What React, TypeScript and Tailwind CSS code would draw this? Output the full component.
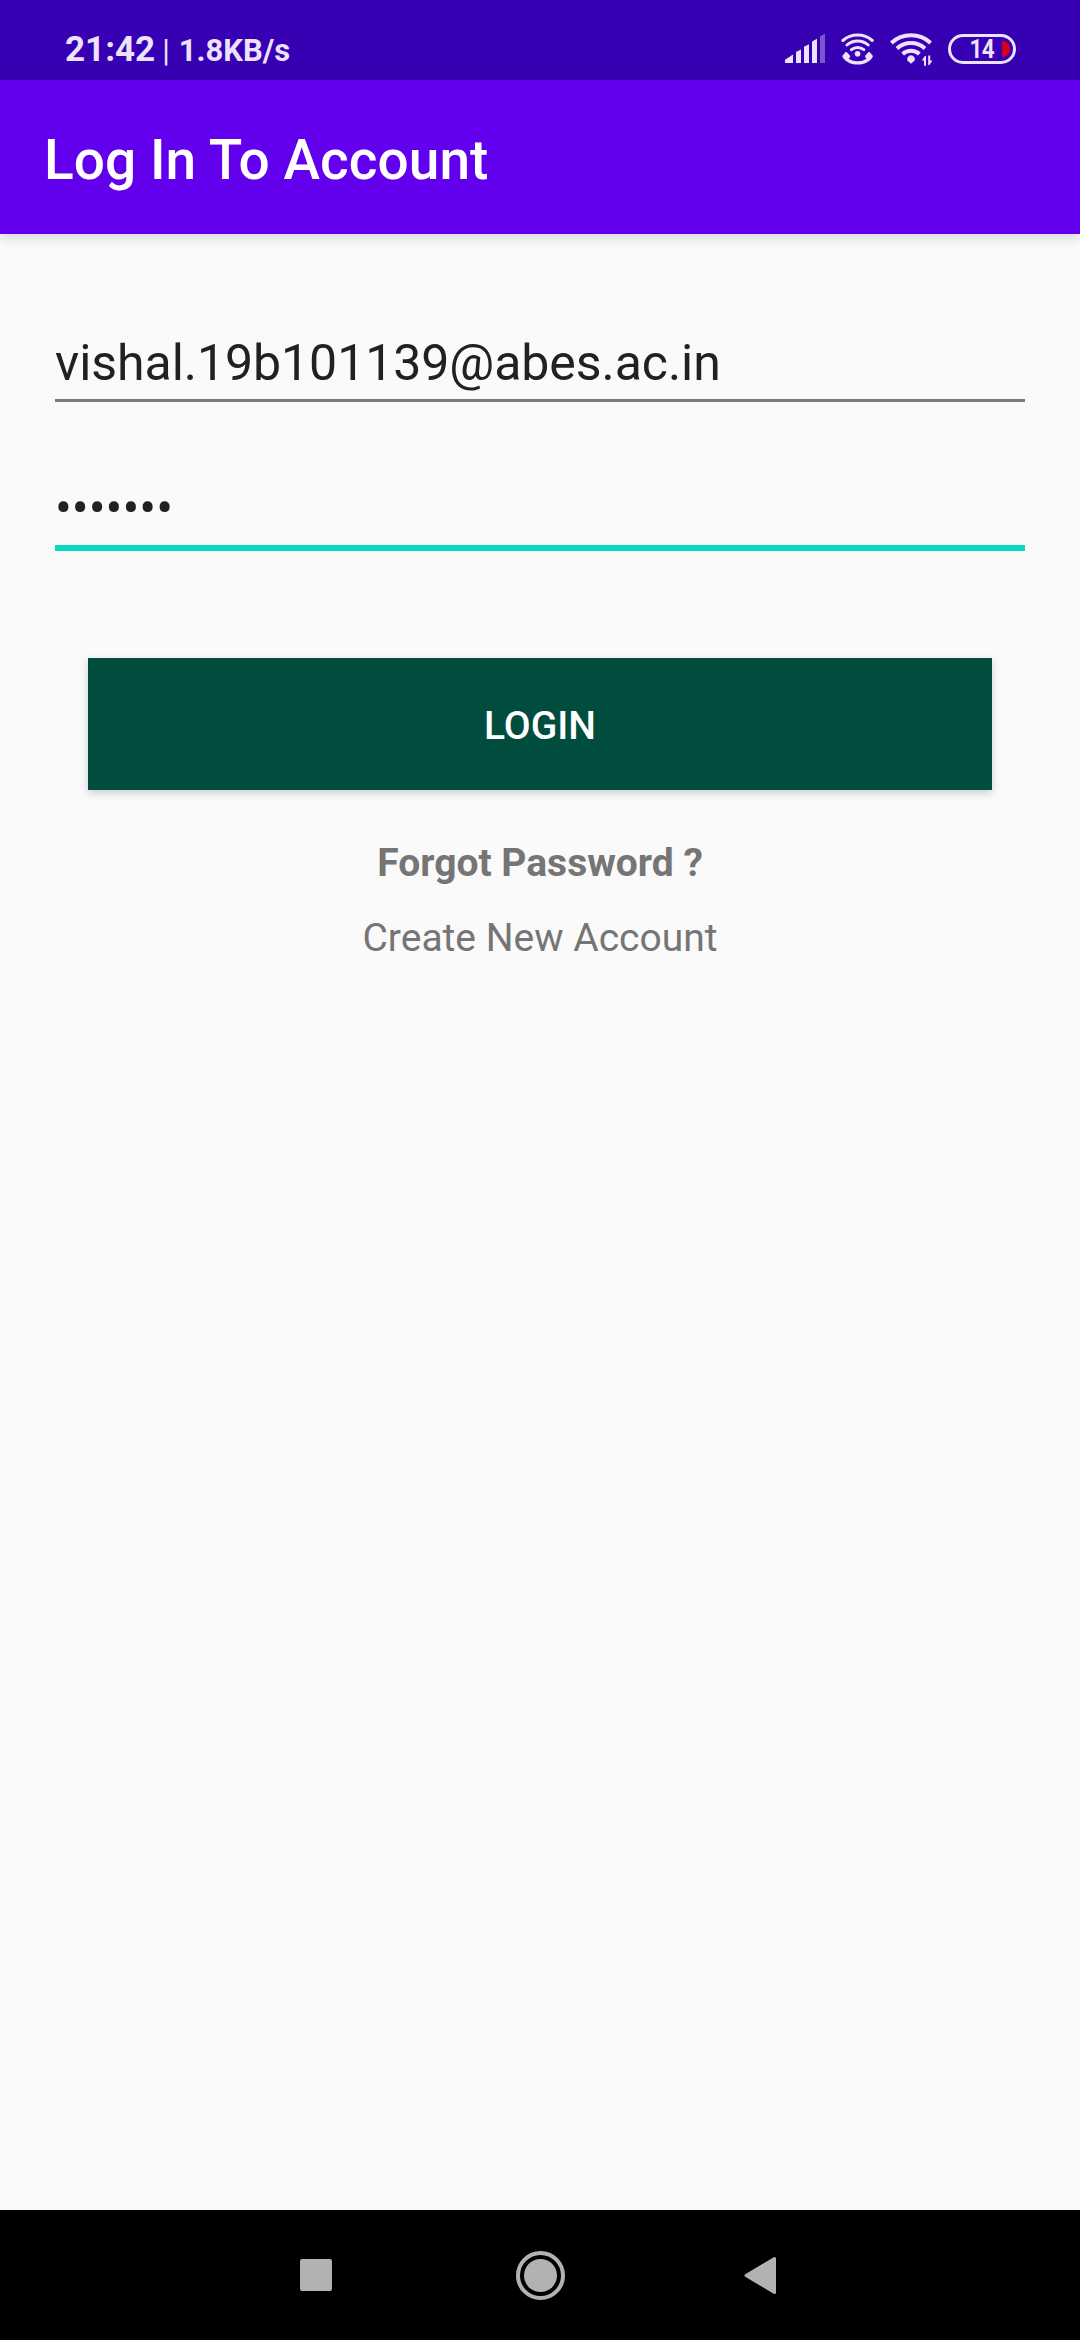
import React from "react";

const SignalIcon = () => (
  <svg className="ml-auto h-[30px] w-[40px]" viewBox="785 34 40 30" fill="#ece2fb">
    <path d="M785 63v-3.2l8-5.2V63zM796 63V52l5-2.6V63zM804 63V46.8l5-2.6V63zM812 63V41.4l5-2.6V63z" />
    <path d="M820 63V36.2l5-2.6V63z" opacity="0.38" />
  </svg>
);

const WifiCallingIcon = () => (
  <svg className="ml-[16px] h-[34px] w-[34px]" viewBox="841 32 34 34" fill="none" stroke="#ece2fb">
    <path d="M842.9 40.5a22.5 22.5 0 0 1 29.4 0" strokeWidth="3" strokeLinecap="round" />
    <path d="M847 45a16 16 0 0 1 21.2 0" strokeWidth="3" strokeLinecap="round" />
    <path d="M851.4 49.7a9.6 9.6 0 0 1 12.4 0" strokeWidth="3" strokeLinecap="round" />
    <circle cx="857.6" cy="53.8" r="2.8" fill="#ece2fb" stroke="none" />
    <path
      d="M845.2 52.4l-3 3.6c1.2 4.8 8.2 8.6 15.4 8.6s14.2-3.8 15.4-8.6l-3-3.6c-.5-.6-1.4-.6-1.9 0l-2.8 3.2c-.5.7-.2 1.5.3 2.1l.9 1c-2.6 1.7-5.6 2.5-8.9 2.5s-6.3-.8-8.9-2.5l.9-1c.5-.6.8-1.4.3-2.1l-2.8-3.2c-.5-.6-1.4-.6-1.9 0z"
      fill="#ece2fb"
      stroke="none"
    />
  </svg>
);

const WifiIcon = () => (
  <svg className="ml-[15px] h-[34px] w-[44px]" viewBox="890 33 44 34" fill="none" stroke="#ece2fb">
    <path d="M891.4 44a29 29 0 0 1 39.2 0" strokeWidth="4" />
    <path d="M897 49.4a21 21 0 0 1 28 0" strokeWidth="4" />
    <path d="M902.6 54.9a12.7 12.7 0 0 1 16.8 0" strokeWidth="4" />
    <path d="M911 64.7l-3.7-3.3a3.9 3.9 0 1 1 7.4 0z" fill="#ece2fb" stroke="none" />
    <path
      d="M924 66.7V61.6H921.8L924.8 57H926V66.7zM928.2 56.4H930.2V61.4H932.4L929.4 66H928.2z"
      fill="#ece2fb"
      stroke="none"
    />
  </svg>
);

const BatteryIcon = () => (
  <div className="relative ml-[14px] flex h-[30px] w-[68px] items-center justify-center overflow-hidden rounded-full border-[3px] border-[#ece2fb]">
    <span className="scale-x-90 pt-px text-[25px] leading-[24px] font-bold tracking-[-0.5px] text-[#ece2fb]">14</span>
    <svg className="absolute top-[4px] right-[3px] h-[16px] w-[8px]" viewBox="0 0 8 16">
      <path d="M0 0c5 0 8 3.6 8 8s-3 8-8 8z" fill="#d5001c" />
    </svg>
  </div>
);

export default function App() {
  return (
    <div className="flex h-[2340px] w-[1080px] flex-col overflow-hidden bg-[#fafafa] font-['Roboto',sans-serif]">
      <div className="flex h-[80px] shrink-0 items-center bg-[#3700b3] pt-[18px] pr-[64px] pl-[65px] text-[#ece2fb]">
        <div className="flex items-baseline pt-[5px] font-bold whitespace-pre">
          <span className="text-[35px] leading-[40px]">21:42</span>
          <span className="ml-[7px] text-[31px] font-normal">|</span>
          <span className="ml-[9px] text-[31px]">1.8KB/s</span>
        </div>
        <SignalIcon />
        <WifiCallingIcon />
        <WifiIcon />
        <BatteryIcon />
      </div>

      <header className="z-10 flex h-[154px] shrink-0 items-center bg-[#6200ee] pt-[6px] pl-[44px] shadow-[0_4px_12px_rgba(0,0,0,0.15)]">
        <h1 className="text-[55px] leading-[64px] font-medium tracking-[0.05px] text-white">Log In To Account</h1>
      </header>

      <main className="flex flex-1 flex-col px-[55px] pt-[99px] text-[#212121]">
        <div className="h-[69px] border-b-[3px] border-[#7b7b7b] text-[50px] leading-[60px] tracking-[-0.05px]">
          vishal.19b101139@abes.ac.in
        </div>
        <div className="mt-[76px] h-[73px] border-b-[6px] border-[#0bd8c4] text-[50px] leading-[60px]">•••••••</div>
        <button className="mx-[33px] mt-[107px] h-[132px] bg-[#004d40] pt-[4px] text-[39px] font-medium text-white shadow-[0_3px_8px_rgba(0,0,0,0.18)]">
          LOGIN
        </button>
        <a className="mt-[50px] text-center text-[39px] leading-[46px] font-bold text-[#757575]">Forgot Password ?</a>
        <a className="mt-[29px] text-center text-[39px] leading-[46px] text-[#757575]">Create New Account</a>
      </main>

      <nav className="flex h-[130px] shrink-0 items-center bg-black pl-[300px]">
        <div className="size-[32px] rounded-[2px] bg-[#b2b2b2]" />
        <svg className="ml-[183px] size-[50px]" viewBox="0 0 50 50">
          <circle cx="25.5" cy="25.5" r="22.5" fill="none" stroke="#b2b2b2" strokeWidth="4" />
          <circle cx="25.5" cy="25.5" r="16.5" fill="#b2b2b2" />
        </svg>
        <svg className="ml-[179px] h-[38px] w-[32px]" viewBox="0 0 32 38">
          <path d="M2 19.5L30.5 2.5v34z" fill="#b2b2b2" stroke="#b2b2b2" strokeWidth="3" strokeLinejoin="round" />
        </svg>
      </nav>
    </div>
  );
}
